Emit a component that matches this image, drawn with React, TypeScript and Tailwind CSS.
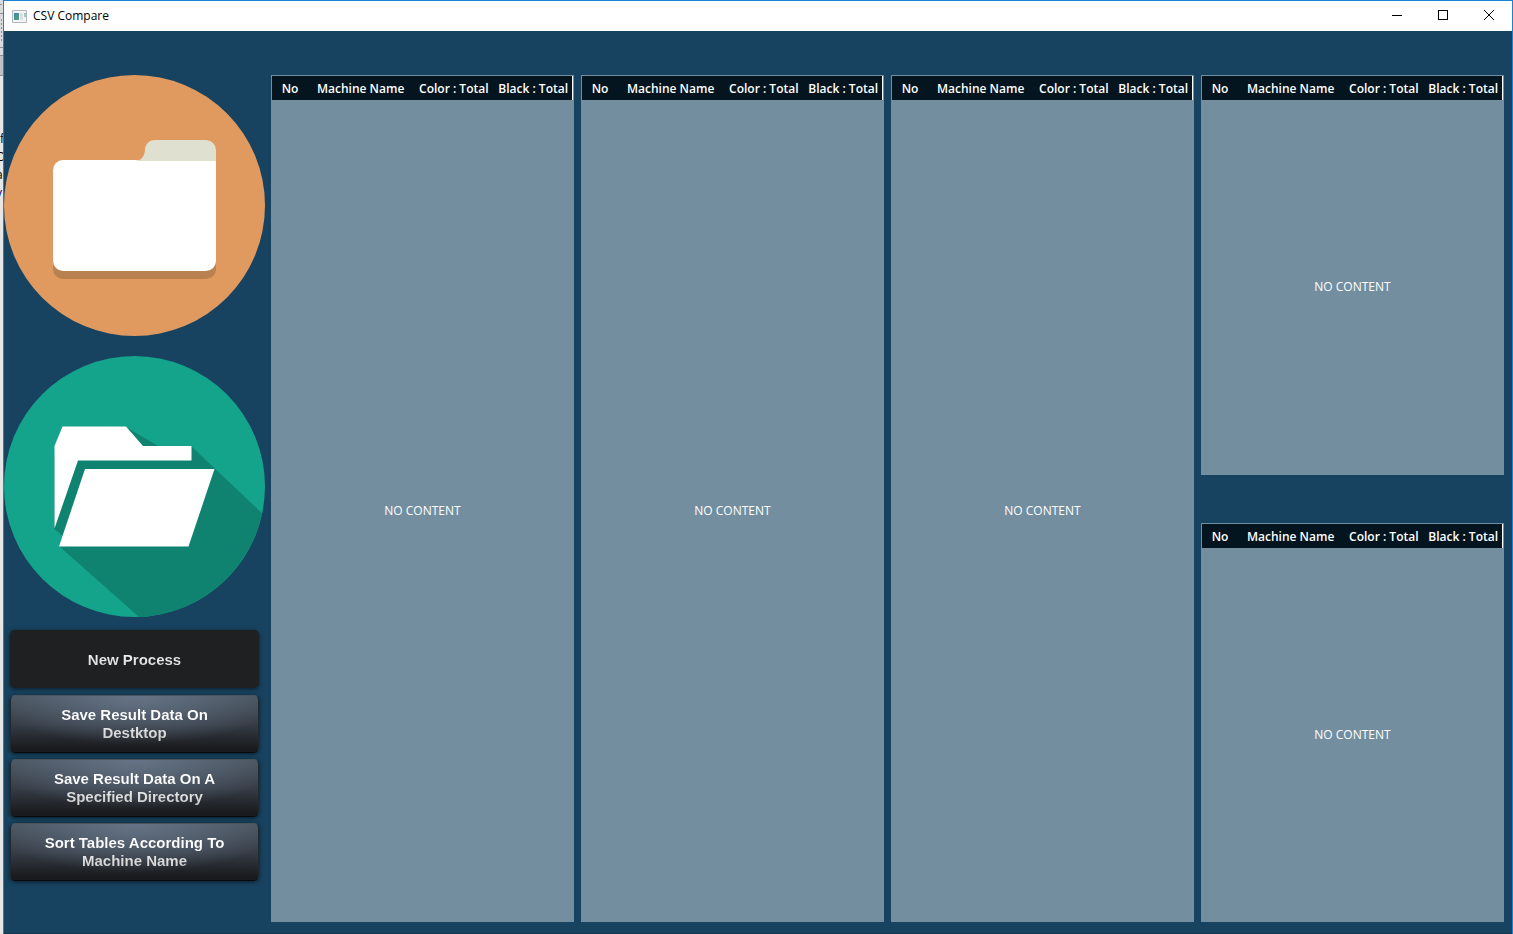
import React from "react";

const columns = ["No", "Machine Name", "Color : Total", "Black : Total"];

const actions = [
  "Save Result Data On Destktop",
  "Save Result Data On A Specified Directory",
  "Sort Tables According To Machine Name",
];

function ResultTable({ label }: { label: string }) {
  return (
    <section aria-label={label} className="flex min-w-0 flex-1 flex-col bg-[#738e9f] text-xs">
      <div className="p-px pb-0">
        <table className="w-full table-fixed border-collapse bg-[#04151f] text-white">
          <colgroup>
            <col className="w-[12%]" />
            <col className="w-[35%]" />
            <col className="w-[27%]" />
            <col className="w-[26%]" />
          </colgroup>
          <thead>
            <tr className="h-6 border-r border-white">
              {columns.map((column) => (
                <th key={column} scope="col" className="p-0 pt-[2px] text-center font-[650] whitespace-nowrap">
                  {column}
                </th>
              ))}
            </tr>
          </thead>
        </table>
      </div>
      <p className="flex flex-1 items-center justify-center text-white">NO CONTENT</p>
    </section>
  );
}

function ClosedFolder() {
  return (
    <svg viewBox="0 0 261 261" className="block w-full" aria-hidden="true">
      <circle cx="130.5" cy="130.5" r="130.5" fill="#e09a60" />
      <path d="M49 100h163v94a10 10 0 0 1-10 10H59a10 10 0 0 1-10-10z" fill="#b98050" />
      <path d="M132 86c7-1 9-7 9-12 1-6 5-9 10-9h51a10 10 0 0 1 10 10v15h-80z" fill="#dfe0d0" />
      <path d="M59 85h73l4 1h76v100a10 10 0 0 1-10 10H59a10 10 0 0 1-10-10V95a10 10 0 0 1 10-10z" fill="#fff" />
    </svg>
  );
}

function OpenFolder() {
  return (
    <svg viewBox="0 0 261 261" className="block w-full" aria-hidden="true">
      <defs>
        <clipPath id="disc">
          <circle cx="130.5" cy="130.5" r="130.5" />
        </clipPath>
      </defs>
      <circle cx="130.5" cy="130.5" r="130.5" fill="#14a38b" />
      <g clipPath="url(#disc)">
        <path d="M122 71L154 90H187L261 160V261H135L55 190L63 183L50 173V100z" fill="#108370" />
      </g>
      <path d="M58.500 70.500H122L139 90H187.500V104.500H74L50.500 172.500V90z" fill="#fff" />
      <path d="M81 113H210.500L184.500 190.500H55z" fill="#fff" />
    </svg>
  );
}

function WindowControls() {
  const button = "flex h-full w-[46px] items-center justify-center";
  return (
    <div className="flex h-full pb-[2px] text-black">
      <button type="button" aria-label="Minimize" className={button}>
        <svg width="10" height="10" shapeRendering="crispEdges">
          <path d="M0 5.500h10" stroke="currentColor" />
        </svg>
      </button>
      <button type="button" aria-label="Maximize" className={button}>
        <svg width="10" height="10" shapeRendering="crispEdges">
          <path d="M.5.500h9v9h-9z" fill="none" stroke="currentColor" />
        </svg>
      </button>
      <button type="button" aria-label="Close" className={button}>
        <svg width="10" height="10">
          <path d="M0 0l10 10M10 0L0 10" stroke="currentColor" />
        </svg>
      </button>
    </div>
  );
}

function BackgroundWindow() {
  return (
    <div aria-hidden="true" className="flex w-[3px] shrink-0 flex-col overflow-hidden bg-[#e6e6e6] text-xs text-black">
      <svg width="3" height="76" shapeRendering="crispEdges">
        <path d="M0 0h3v56H0z" fill="#d9dcdf" />
        <path d="M0 56h3v20H0z" fill="#bfc1c4" />
        <path d="M0 4h2M0 13.500h3M0 47.500h3M0 55.500h3M0 75.500h3" stroke="#8d9195" />
        <path d="M1.500 19v24" stroke="#8d9195" strokeDasharray="2 2" />
      </svg>
      <div className="flex flex-col pt-[54px] leading-[18px]">
        <span>f</span>
        <span className="-ml-1">O</span>
        <span className="-ml-1">a</span>
        <span className="-ml-1 text-[#000080]">v</span>
      </div>
    </div>
  );
}

export default function App() {
  return (
    <div className="flex min-h-screen font-['Open_Sans','Noto_Sans',sans-serif]">
      <BackgroundWindow />
      <div className="flex min-w-0 flex-1 flex-col border-x border-t border-[#1883d7] bg-[#174360]">
        <header className="flex h-[30px] items-center justify-between bg-white pl-2">
          <div className="flex items-center gap-[6px]">
            <svg width="15" height="13" viewBox="0 0 15 13" aria-hidden="true">
              <defs>
                <linearGradient id="screen" x1="0" y1="0" x2="1" y2="1">
                  <stop offset="0" stopColor="#3f7fa8" />
                  <stop offset="1" stopColor="#54a878" />
                </linearGradient>
              </defs>
              <path d="M.5.500h14v12H.5z" fill="#f4f4f4" stroke="#b4b8bc" />
              <path d="M2 3h5v7H2z" fill="url(#screen)" />
              <path d="M8 3h3v7H8z" fill="#dcdfe2" />
              <path d="M12 3h2v4h-2z" fill="#9fc9c0" />
            </svg>
            <h1 className="text-xs text-black">CSV Compare</h1>
          </div>
          <WindowControls />
        </header>

        <div className="flex flex-1 border-b border-[#123650] pt-11">
          <aside className="mr-[6px] flex w-[261px] shrink-0 flex-col">
            <button type="button" aria-label="Choose folder" className="rounded-full">
              <ClosedFolder />
            </button>
            <button type="button" aria-label="Open folder" className="mt-5 rounded-full">
              <OpenFolder />
            </button>
            <div className="mx-[6px] mt-[13px] flex flex-col gap-[7px] font-['Liberation_Sans',Arial,sans-serif] text-[15px] leading-[18px] font-bold">
              <button
                type="button"
                className="h-[58px] rounded-[5px] bg-[#1f2021] shadow-[0_1px_4px_rgba(0,0,0,0.6)]"
              >
                <span className="block bg-linear-to-b from-white to-[#d0d0d0] bg-clip-text pt-px text-transparent">
                  New Process
                </span>
              </button>
              <div className="flex flex-col gap-[6px]">
                {actions.map((action) => (
                  <button
                    key={action}
                    type="button"
                    className="h-[58px] rounded-[5px] border border-t-[#4b545d] border-r-[#22282e] border-b-[#08090a] border-l-[#22282e] bg-[radial-gradient(ellipse_60%_85%_at_50%_0%,#657487_0%,rgba(101,116,135,0)_100%),linear-gradient(to_bottom,#4a545f_0%,#363d46_50%,#191b1e_92%)] bg-origin-border px-6 shadow-[0_1px_4px_rgba(0,0,0,0.6)]"
                  >
                    <span className="block bg-linear-to-b from-white from-30% to-[#c8c8c8] bg-clip-text text-transparent">
                      {action}
                    </span>
                  </button>
                ))}
              </div>
            </div>
          </aside>

          <main className="mr-2 mb-[11px] flex min-w-0 flex-1 gap-[7px]">
            <ResultTable label="First file" />
            <ResultTable label="Second file" />
            <ResultTable label="Comparison" />
            <div className="flex min-w-0 flex-1 flex-col gap-12">
              <ResultTable label="Added machines" />
              <ResultTable label="Removed machines" />
            </div>
          </main>
        </div>
      </div>
    </div>
  );
}
